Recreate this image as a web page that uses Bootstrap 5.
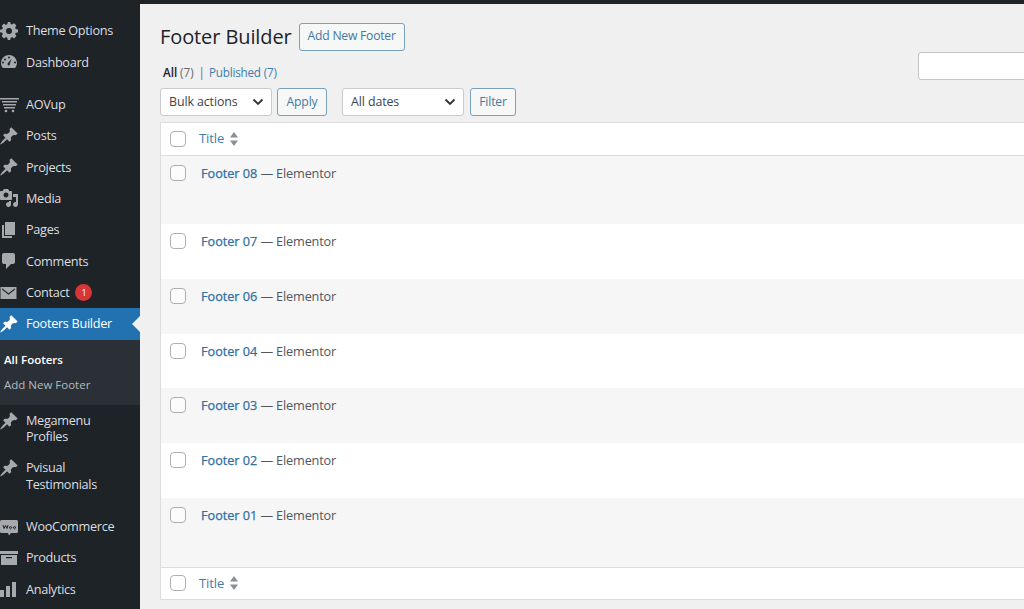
<!DOCTYPE html>
<html lang="en">
<head>
<meta charset="utf-8">
<title>Footer Builder</title>
<link href="https://cdn.jsdelivr.net/npm/bootstrap@5.3.0/dist/css/bootstrap.min.css" rel="stylesheet">
<style>
html,body{height:609px;overflow:hidden;}
body{background:#f0f0f1;font-family:"Open Sans","Noto Sans","Liberation Sans",sans-serif;color:#3c434a;font-size:13px;}
.topstrip{height:4px;background:#1d2327;}
.shell{height:605px;overflow:hidden;}
.sidenav{width:140px;flex:none;background:#1d2327;padding-top:11.3px;color:#dfe1e3;}
.mitem{display:flex;align-items:center;height:31.4px;color:#dcdee0;font-size:12.7px;letter-spacing:-.3px;position:relative;}
.mitem svg,.mtall svg{flex:none;width:20px;height:20px;margin-left:-1px;margin-right:7px;fill:#a7aaad;}
.mtall{display:flex;align-items:flex-start;color:#dcdee0;font-size:12.7px;line-height:16.7px;letter-spacing:-.3px;height:47.5px;padding-top:7px;}
.mtall svg{margin-top:-1px;}
.gap1{height:10.5px;}
.gap2{height:11.2px;}
.mactive{background:#2271b1;color:#fff;}
.mactive svg{fill:#fff;}
.mactive::after{content:"";position:absolute;right:0;top:8px;border:8px solid transparent;border-right-color:#f0f0f1;border-left-width:0;}
.subnav{background:#2a3035;height:65px;padding-top:7px;font-size:11.5px;}
.subnav div{height:25.5px;line-height:25.5px;padding-left:4px;color:#b4b9be;}
.subnav .cur{color:#fff;font-weight:600;}
.redcount{display:inline-block;width:17px;height:17px;border-radius:50%;background:#d63638;color:#fff;font-size:9px;line-height:17px;text-align:center;margin-left:6px;letter-spacing:0;}
.mainarea{flex:1;min-width:0;padding-left:20px;overflow:hidden;}
.headrow{height:48px;align-items:center;padding-top:17px;}
.pagettl{font-size:20px;font-weight:400;color:#1d2327;margin:0;letter-spacing:-.1px;}
.wpbtn{display:inline-flex;align-items:center;justify-content:center;height:27px;background:#f6f7f7;border:1px solid #7ba0bb;border-radius:3px;color:#4479a0;font-size:12.2px;padding:0;text-decoration:none;letter-spacing:-.15px;}
.wpbtn:hover{color:#4479a0;}
.addbtn{width:106px;margin-left:7px;height:28px;letter-spacing:-.25px;}
.viewrow{height:27px;font-size:11.7px;padding-top:12px;padding-left:3px;position:relative;letter-spacing:-.05px;line-height:16px;}
.viewrow b{font-weight:600;color:#1d2327;}
.viewrow .cnt{color:#646970;}
.viewrow .pipe{color:#646970;margin:0 4px 0 5px;}
.viewrow a{color:#3f7dab;text-decoration:none;letter-spacing:-.2px;}
.seeker{position:absolute;left:758px;top:0;width:200px;height:28px;background:#fff;border:1px solid #c3c4c7;border-radius:3px;}
.toolrow{height:28px;margin-top:9px;}
.wpselect{display:flex;align-items:center;justify-content:space-between;background:#fff;border:1px solid #c9cbce;border-radius:3px;height:28px;color:#3c434a;font-size:12.4px;letter-spacing:-.1px;padding:0 7px 0 8px;}
.sel1{width:112px;}
.sel2{width:122px;margin-left:15px;}
.wpselect svg{width:12px;height:8px;}
.btn1{width:50px;margin-left:5px;height:28px;}
.btn2{width:46px;margin-left:6px;height:28px;}
.tablebox{margin-top:6px;width:1000px;background:#fff;border:1px solid #dcdcde;}
.thrw{height:32px;display:flex;align-items:center;}
.thtop{border-bottom:1px solid #dcdcde;height:33px;}
.thbot{border-top:1px solid #dcdcde;height:32px;}
.rw{display:flex;align-items:flex-start;padding-top:8px;}
.h68{height:68px;}
.h69{height:69px;}
.h55{height:54.8px;}
.alt{background:#f6f6f7;}
.tick{flex:none;width:16px;height:16px;background:#fff;border:1px solid #8c8f94;border-radius:4px;margin-left:9px;opacity:.7;}
.rw .tick{margin-top:1px;}
.ttlcol{margin-left:13px;color:#3f7dab;font-size:13px;display:flex;align-items:center;gap:5px;letter-spacing:-.1px;}
.ttlcol svg{width:10px;height:14px;fill:#8c8f94;}
.entry{margin-left:15px;font-size:12.7px;color:#50575e;line-height:18px;letter-spacing:-.15px;}
.entry a{color:#2f709f;font-weight:400;text-decoration:none;letter-spacing:-.02px;-webkit-text-stroke:.25px #2f709f;}
</style>
</head>
<body>
<svg width="0" height="0" class="d-block"><defs>
<path id="pinicon" d="M10.440 3.020l1.820-1.820 6.360 6.350-1.830 1.820c-1.050-.68-2.480-.57-3.410.36l-.75.75c-.92.93-1.040 2.350-.35 3.410l-1.830 1.820-2.410-2.410-2.800 2.790c-.42.420-3.380 2.710-3.800 2.290s1.860-3.390 2.280-3.810l2.790-2.790L4.100 9.360l1.830-1.820c1.050.69 2.480.57 3.400-.36l.75-.75c.93-.92 1.040-2.350.36-3.410z"/>
</defs></svg>
<div class="topstrip"></div>
<div class="shell d-flex">
<nav class="sidenav">
  <div class="mitem"><svg viewBox="0 0 20 20"><path d="M18 11.600V8.400l-2.300-.5a6 6 0 0 0-.6-1.400l1.300-2-2.300-2.300-2 1.300a6 6 0 0 0-1.400-.6L10.200 1H7.800l-.5 2.300a6 6 0 0 0-1.400.6l-2-1.300L1.600 4.900l1.300 2a6 6 0 0 0-.6 1.400L0 8.800v2.400l2.300.5c.1.500.3 1 .6 1.400l-1.300 2 2.300 2.300 2-1.300c.4.300.9.500 1.400.6l.5 2.300h2.400l.5-2.300c.5-.1 1-.3 1.400-.6l2 1.300 2.300-2.300-1.300-2c.3-.4.500-.9.600-1.400zM9 13a3 3 0 1 1 0-6 3 3 0 0 1 0 6z" transform="translate(1 0)"/></svg>Theme Options</div>
  <div class="mitem"><svg viewBox="0 0 20 20"><path d="M10 3a8 8 0 0 0-8 8c0 2 .7 3.700 1.900 5h12.200A8 8 0 0 0 10 3zM6 6.500a1 1 0 1 1 0 2 1 1 0 0 1 0-2zM4 11.500a1 1 0 1 1 0-2 1 1 0 0 1 0 2zM10 13.500a1.500 1.500 0 0 1-1-2.600L12.500 7l-1.600 4.700A1.500 1.500 0 0 1 10 13.500zM10 6.500a1 1 0 1 1 0-2 1 1 0 0 1 0 2zM16 11.500a1 1 0 1 1 0-2 1 1 0 0 1 0 2z"/></svg>Dashboard</div>
  <div class="gap1"></div>
  <div class="mitem"><svg viewBox="0 0 20 20"><path d="M1 4h19v1.500H1zM3 7h15v1.500H3zM4 10h13v1.500H4zM5 13h11v1.500H5z"/><circle cx="7" cy="17" r="1.300"/><circle cx="14" cy="17" r="1.300"/></svg>AOVup</div>
  <div class="mitem"><svg viewBox="0 0 20 20"><use href="#pinicon"/></svg>Posts</div>
  <div class="mitem"><svg viewBox="0 0 20 20"><use href="#pinicon"/></svg>Projects</div>
  <div class="mitem"><svg viewBox="0 0 20 20"><path d="M13 11V4c0-.55-.45-1-1-1h-1.670L9 1H5L3.670 3H2c-.55 0-1 .45-1 1v7c0 .55.45 1 1 1h10c.55 0 1-.45 1-1zM7 4.500c1.380 0 2.500 1.120 2.500 2.500S8.380 9.500 7 9.500 4.500 8.380 4.500 7 5.620 4.500 7 4.500zM14 6h5v10.500c0 1.380-1.120 2.500-2.500 2.500S14 17.880 14 16.500s1.120-2.500 2.500-2.500c.17 0 .34.020.5.050V9h-3V6zm-4 8.050V13h2v3.500c0 1.380-1.120 2.500-2.500 2.500S7 17.880 7 16.500 8.120 14 9.500 14c.17 0 .34.020.5.050z"/></svg>Media</div>
  <div class="mitem"><svg viewBox="0 0 20 20"><path d="M6 15V2h10v13H6zm-1 1h8v2H3V5h2v11z"/></svg>Pages</div>
  <div class="mitem"><svg viewBox="0 0 20 20"><path d="M5 2h9c1.100 0 2 .9 2 2v7c0 1.100-.9 2-2 2h-2l-5 5v-5H5c-1.100 0-2-.9-2-2V4c0-1.100.9-2 2-2z"/></svg>Comments</div>
  <div class="mitem"><svg viewBox="0 0 20 20"><path d="M1.500 4h16v12h-16zm1.700 1.300v1.400l6.300 5 6.300-5V5.300l-6.300 5z" fill-rule="evenodd"/></svg>Contact<span class="redcount">1</span></div>
  <div class="mitem mactive"><svg viewBox="0 0 20 20"><use href="#pinicon"/></svg>Footers Builder</div>
  <div class="subnav"><div class="cur">All Footers</div><div>Add New Footer</div></div>
  <div class="mtall"><svg viewBox="0 0 20 20"><use href="#pinicon"/></svg><span>Megamenu<br>Profiles</span></div>
  <div class="mtall"><svg viewBox="0 0 20 20"><use href="#pinicon"/></svg><span>Pvisual<br>Testimonials</span></div>
  <div class="gap2"></div>
  <div class="mitem"><svg viewBox="0 0 20 20"><path d="M2.500 3h15A1.500 1.500 0 0 1 19 4.500v10a1.500 1.500 0 0 1-1.500 1.500H12l-2 2.500L9 16H2.500A1.500 1.500 0 0 1 1 14.500v-10A1.500 1.500 0 0 1 2.500 3z"/><path d="M4 8l1 3.500L6.500 8.500 8 11.500 9 8M11.500 9.700a1 1 0 1 0 .01 0M15.500 9.700a1 1 0 1 0 .01 0" fill="none" stroke="#1d2327" stroke-width="1"/></svg>WooCommerce</div>
  <div class="mitem"><svg viewBox="0 0 20 20"><path d="M1 3h18v3H1zM2 7h16v10H2zm5 2v1.300h6V9z" fill-rule="evenodd"/></svg>Products</div>
  <div class="mitem"><svg viewBox="0 0 20 20"><path d="M1 11h4v7H1zM7 7h4v11H7zM13 3h4v15h-4z"/></svg>Analytics</div>
</nav>
<main class="mainarea">
  <div class="headrow d-flex">
    <h1 class="pagettl">Footer Builder</h1>
    <a href="#" class="wpbtn addbtn">Add New Footer</a>
  </div>
  <div class="viewrow"><b>All</b> <span class="cnt">(7)</span><span class="pipe">|</span><a href="#">Published (7)</a><div class="seeker"></div></div>
  <div class="toolrow d-flex">
    <div class="wpselect sel1">Bulk actions<svg viewBox="0 0 12 8"><path d="M1.500 1.500L6 6l4.500-4.500" fill="none" stroke="#2c3338" stroke-width="1.800"/></svg></div>
    <a href="#" class="wpbtn btn1">Apply</a>
    <div class="wpselect sel2">All dates<svg viewBox="0 0 12 8"><path d="M1.500 1.500L6 6l4.500-4.500" fill="none" stroke="#2c3338" stroke-width="1.800"/></svg></div>
    <a href="#" class="wpbtn btn2">Filter</a>
  </div>
  <div class="tablebox">
    <div class="thrw thtop"><span class="tick"></span><span class="ttlcol">Title<svg viewBox="0 0 10 14"><path d="M5 0l4 5.500H1zM5 14L1 8.500h8z"/></svg></span></div>
    <div class="rw alt h68"><span class="tick"></span><span class="entry"><a href="#">Footer 08</a> — Elementor</span></div>
    <div class="rw h55"><span class="tick"></span><span class="entry"><a href="#">Footer 07</a> — Elementor</span></div>
    <div class="rw alt h55"><span class="tick"></span><span class="entry"><a href="#">Footer 06</a> — Elementor</span></div>
    <div class="rw h55"><span class="tick"></span><span class="entry"><a href="#">Footer 04</a> — Elementor</span></div>
    <div class="rw alt h55"><span class="tick"></span><span class="entry"><a href="#">Footer 03</a> — Elementor</span></div>
    <div class="rw h55"><span class="tick"></span><span class="entry"><a href="#">Footer 02</a> — Elementor</span></div>
    <div class="rw alt h69"><span class="tick"></span><span class="entry"><a href="#">Footer 01</a> — Elementor</span></div>
    <div class="thrw thbot"><span class="tick"></span><span class="ttlcol">Title<svg viewBox="0 0 10 14"><path d="M5 0l4 5.500H1zM5 14L1 8.500h8z"/></svg></span></div>
  </div>
</main>
</div>
<script src="https://cdn.jsdelivr.net/npm/bootstrap@5.3.0/dist/js/bootstrap.bundle.min.js"></script>
</body>
</html>
